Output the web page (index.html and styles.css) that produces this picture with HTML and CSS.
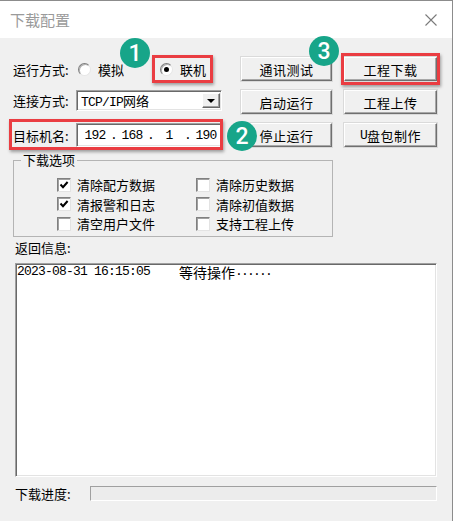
FILE: index.html
```html
<!DOCTYPE html>
<html lang="zh-CN">
<head>
    <meta charset="UTF-8">
    <title>下载配置</title>
    <link rel="stylesheet" href="styles.css">
</head>
<body>
    <div class="window">
        <div class="titlebar">
            <span class="title">下载配置</span>
            <svg class="close" width="12" height="12" viewBox="0 0 12 12">
                <path d="M0.5 0.5 L11.5 11.5 M11.5 0.5 L0.5 11.5" stroke="#7a7a7a" stroke-width="1.1" fill="none"/>
            </svg>
        </div>

        <div class="content">
            <!-- Parte superior: parámetros y botones -->
            <div class="top">
                <div class="form">
                    <div class="row row-mode">
                        <span class="label">运行方式:</span>
                        <span class="radio first"><span class="radio-mark"></span>模拟</span>
                        <span class="radio on hl hl-radio"><span class="radio-mark checked"></span>联机</span>
                    </div>
                    <div class="row row-link">
                        <span class="label">连接方式:</span>
                        <div class="select">
                            <span class="select-text"><span class="mono">TCP/IP</span>网络</span>
                            <span class="drop"><span class="arrow"></span></span>
                        </div>
                    </div>
                    <div class="row row-target hl hl-target">
                        <span class="label">目标机名:</span>
                        <div class="ip">
                            <span class="oct">192</span><span class="dot">.</span>
                            <span class="oct">168</span><span class="dot">.</span>
                            <span class="oct">1</span><span class="dot">.</span>
                            <span class="oct">190</span>
                        </div>
                    </div>
                </div>

                <div class="buttons">
                    <div class="btn">通讯测试</div>
                    <div class="btn hl hl-btn">工程下载</div>
                    <div class="btn">启动运行</div>
                    <div class="btn">工程上传</div>
                    <div class="btn">停止运行</div>
                    <div class="btn"><span class="mono">U</span>盘包制作</div>
                </div>
            </div>

            <!-- Opciones de descarga -->
            <fieldset class="options">
                <legend>下载选项</legend>
                <div class="checks">
                    <div class="check"><span class="box on"><svg width="10" height="10" viewBox="0 0 10 10"><path d="M1.5 4.5 L4 7.2 L8.6 2" stroke="#000" stroke-width="2" fill="none"/></svg></span>清除配方数据</div>
                    <div class="check"><span class="box"></span>清除历史数据</div>
                    <div class="check"><span class="box on"><svg width="10" height="10" viewBox="0 0 10 10"><path d="M1.5 4.5 L4 7.2 L8.6 2" stroke="#000" stroke-width="2" fill="none"/></svg></span>清报警和日志</div>
                    <div class="check"><span class="box"></span>清除初值数据</div>
                    <div class="check"><span class="box"></span>清空用户文件</div>
                    <div class="check"><span class="box"></span>支持工程上传</div>
                </div>
            </fieldset>

            <div class="info-label">返回信息:</div>
            <div class="log">
                <div class="log-line"><span class="mono">2023-08-31 16:15:05</span><span class="msg">等待操作</span><span class="mono dots">......</span></div>
            </div>

            <div class="progress-row">
                <span class="progress-label">下载进度:</span>
                <div class="progress"></div>
            </div>
        </div>

        <!-- Marcas numeradas -->
        <span class="badge b1">1</span>
        <span class="badge b2">2</span>
        <span class="badge b3">3</span>
    </div>
</body>
</html>
```

FILE: styles.css
```css
body { margin: 0; font-family: "Noto Sans CJK SC", sans-serif; font-size: 13px; color: #000; }
.window { position: relative; width: 453px; height: 521px; box-sizing: border-box; border-top: 1px solid #8c8c8c; border-right: 1px solid #8c8c8c; background: #f0f0f0; overflow: hidden; }
.titlebar { height: 37px; background: #fff; display: flex; align-items: center; justify-content: space-between; padding: 0 15px 0 10px; }
.title { font-size: 15px; color: #9a9a9a; }
.mono { font-family: "Liberation Mono", monospace; font-size: 13px; letter-spacing: -0.8px; }

.content { padding: 17px 0 0 13px; }
.top { display: flex; gap: 19px; }
.form { width: 209px; display: flex; flex-direction: column; }
.row { display: flex; align-items: center; }
.row-mode { height: 28px; }
.row-link { height: 21px; margin-top: 7px; }
.row-target { height: 24px; margin-top: 12px; }
.label { width: 63px; flex: none; }

.radio { display: flex; align-items: center; gap: 7px; }
.radio.first { margin-left: 2px; }
.radio.on { margin-left: 31px; height: 22px; padding: 0 4px 0 5px; }
.radio-mark { position: relative; width: 13px; height: 13px; box-sizing: border-box; border-radius: 50%; background: #fff; border: 1px solid; border-color: #7d7d7d #e6e6e6 #e6e6e6 #7d7d7d; box-shadow: inset 1px 1px 0 #b0b0b0; }
.radio-mark.checked::after { content: ""; position: absolute; left: 3px; top: 3px; width: 5px; height: 5px; border-radius: 50%; background: #000; }

.select { flex: 1; height: 21px; box-sizing: border-box; display: flex; align-items: center; background: #fff; border: 1px solid; border-color: #a0a0a0 #fff #fff #a0a0a0; box-shadow: inset 1px 1px 0 #696969, inset -1px -1px 0 #e3e3e3; }
.select-text { padding-left: 4px; }
.drop { margin-left: auto; margin-right: 1px; width: 18px; height: 15px; box-sizing: border-box; display: flex; align-items: center; justify-content: center; background: #f0f0f0; border: 1px solid; border-color: #fff #696969 #696969 #fff; box-shadow: inset -1px -1px 0 #a0a0a0; }
.arrow { width: 0; height: 0; border-left: 4px solid transparent; border-right: 4px solid transparent; border-top: 4px solid #000; }

.ip { flex: 1; height: 24px; box-sizing: border-box; display: flex; align-items: center; padding-left: 4px; background: #fff; border: 1px solid; border-color: #a0a0a0 #fff #fff #a0a0a0; box-shadow: inset 1px 1px 0 #696969, inset -1px -1px 0 #e3e3e3; font-family: "Liberation Mono", monospace; font-size: 13px; letter-spacing: -0.8px; }
.oct { width: 28px; text-align: center; }
.dot { width: 9px; text-align: center; }

.buttons { display: grid; grid-template-columns: 91px 93px; grid-auto-rows: 24px; column-gap: 12px; row-gap: 9px; margin-top: 2px; }
.btn { display: flex; align-items: center; justify-content: center; letter-spacing: 0.5px; background: #f0f0f0; border: 1px solid; border-color: #fff #6f6f6f #6f6f6f #fff; box-shadow: inset -1px -1px 0 #a8a8a8, 0 0 0 1px #dadada; box-sizing: border-box; }

.options { margin: 5px 0 0 0; width: 320px; box-sizing: border-box; padding: 7px 0 2px 0; border: 1px solid #b4b4b4; }
.options legend { margin-left: 7px; padding: 0 2px; line-height: 16px; }
.checks { display: grid; grid-template-columns: 139px auto; grid-auto-rows: 19.5px; padding-left: 43px; }
.check { display: flex; align-items: center; gap: 6px; }
.box { width: 14px; height: 14px; box-sizing: border-box; display: flex; align-items: center; justify-content: center; background: #fff; border: 1px solid; border-color: #808080 #e3e3e3 #e3e3e3 #808080; box-shadow: inset 1px 1px 0 #a0a0a0; }

.info-label { margin: 3px 0 0 2px; line-height: 16px; }
.log { margin: 7px 0 0 2px; width: 422px; height: 214px; box-sizing: border-box; background: #fff; border: 1px solid; border-color: #a0a0a0 #fff #fff #a0a0a0; box-shadow: inset 1px 1px 0 #696969, inset -1px -1px 0 #e3e3e3; }
.log-line { display: flex; align-items: center; height: 14px; margin-top: 1px; padding-left: 1px; white-space: pre; }
.msg { margin-left: 29px; font-size: 14px; }
.dots { letter-spacing: -1.8px; }

.progress-row { margin: 9px 0 0 2px; display: flex; align-items: center; height: 15px; }
.progress-label { width: 75px; }
.progress { width: 347px; height: 15px; box-sizing: border-box; background: #ececec; border: 1px solid; border-color: #a0a0a0 #fff #fff #a0a0a0; }

/* anotaciones rojas */
.hl { position: relative; }
.hl::after { content: ""; position: absolute; border: 3px solid #ea3d42; box-shadow: 1px 2px 3px rgba(0, 0, 0, 0.35); pointer-events: none; }
.hl-radio::after { left: -3px; right: -3px; top: -3px; bottom: -3px; }
.hl-target::after { left: -4px; right: -1px; top: -4px; bottom: -3px; }
.hl-btn::after { left: -4px; right: -4px; top: -5px; bottom: -5px; }

.badge { position: absolute; width: 30px; height: 30px; border-radius: 50%; background: #17a589; color: #fff; font-family: Roboto, "Liberation Sans", sans-serif; font-size: 23px; font-weight: 500; display: flex; align-items: center; justify-content: center; }
.b1 { left: 120px; top: 37px; }
.b2 { left: 227px; top: 120px; }
.b3 { left: 309px; top: 35px; }
```
